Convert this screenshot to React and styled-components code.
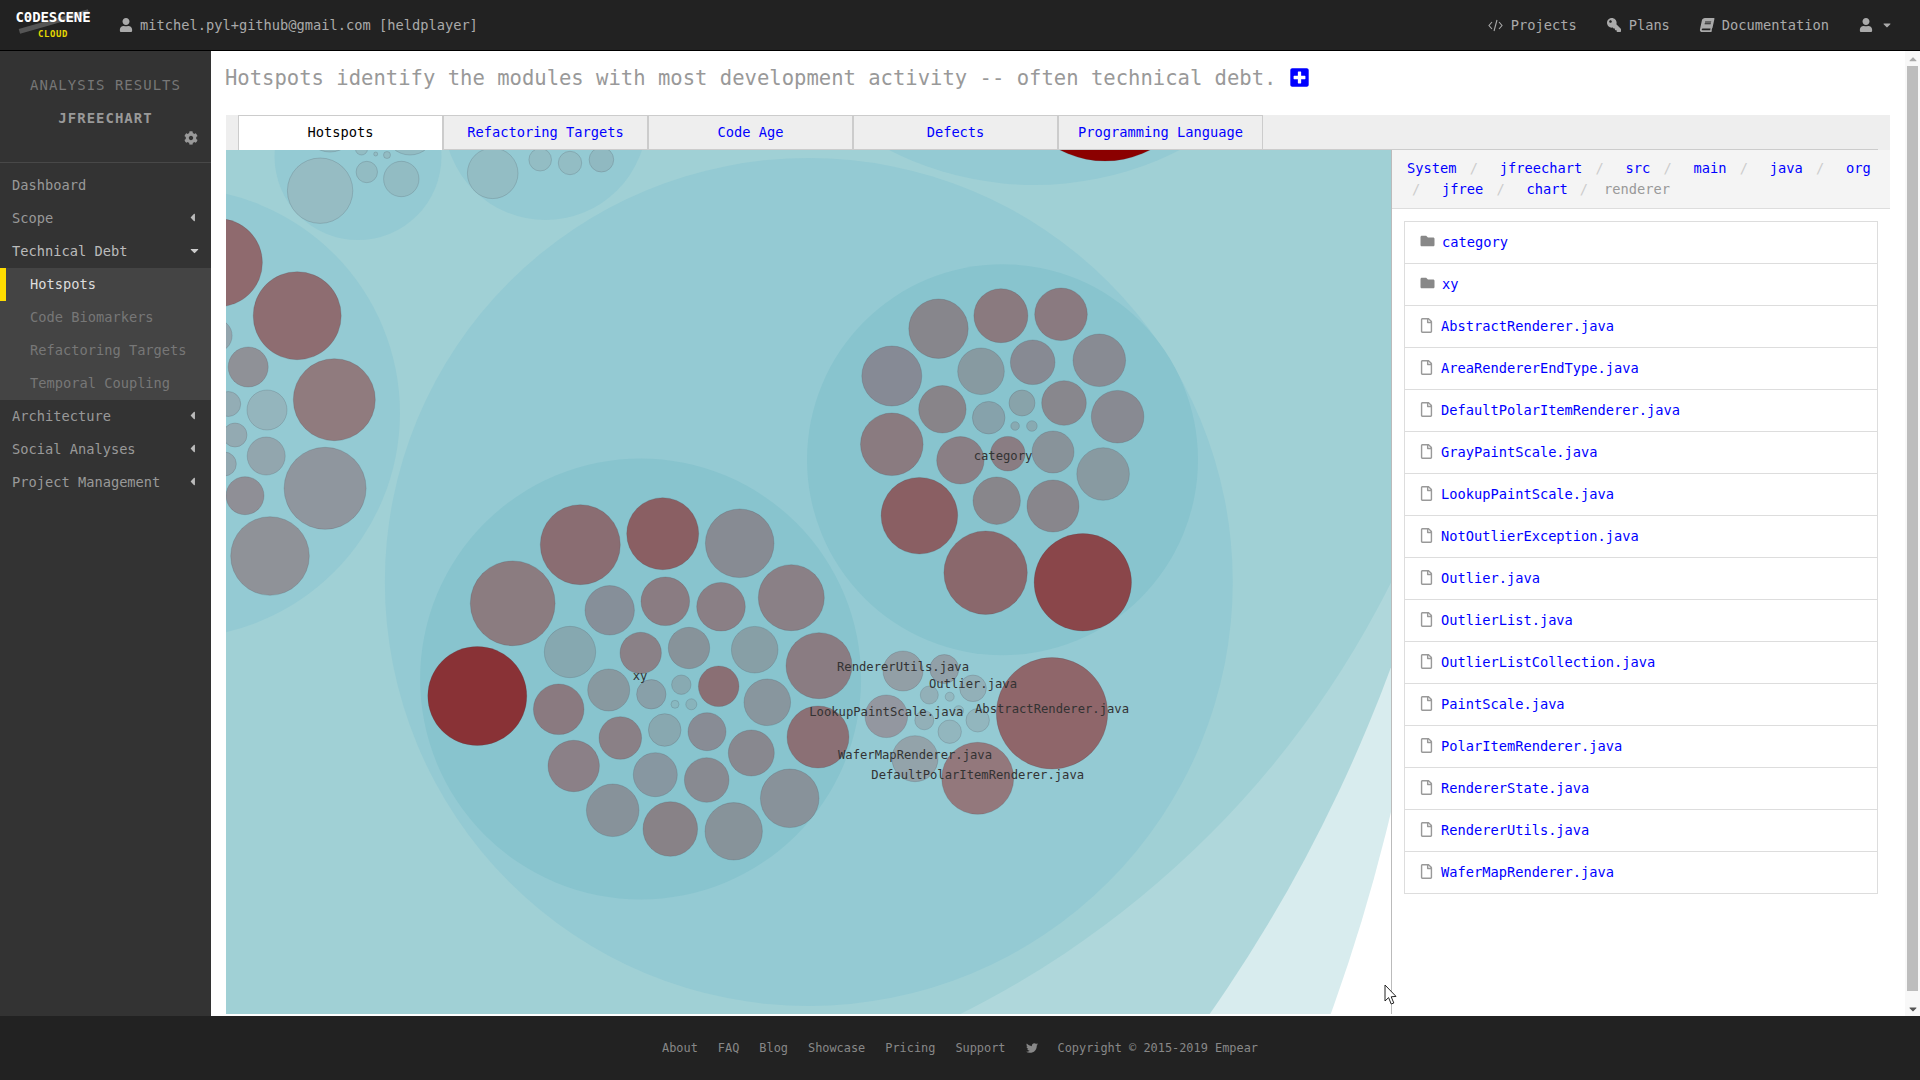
import React from "react";
import styled, { createGlobalStyle } from "styled-components";
import {
  FaUser,
  FaCog,
  FaKey,
  FaBook,
  FaFolder,
  FaRegFile,
  FaPlusSquare,
  FaTwitter,
  FaCaretLeft,
  FaCaretDown,
  FaCaretUp,
} from "react-icons/fa";

const GlobalStyle = createGlobalStyle`
  html, body {
    margin: 0;
    padding: 0;
    height: 100%;
    overflow: hidden;
    background: #fff;
    font-family: "DejaVu Sans Mono", "Liberation Mono", monospace;
    font-size: 13.7px;
  }
  * { box-sizing: border-box; }
`;

const Page = styled.div`
  position: relative;
  width: 1920px;
  height: 1080px;
  display: flex;
  flex-direction: column;
`;

/* top bar */
const TopBar = styled.header`
  height: 51px;
  flex: none;
  display: flex;
  align-items: center;
  background: #222;
  border-bottom: 1px solid #000;
  color: #aaa;
  padding: 0 27px 0 15px;
`;

const Logo = styled.div`
  position: relative;
  width: 76px;
  height: 36px;
  margin-right: 28px;
  text-align: center;
  &::before {
    content: "";
    position: absolute;
    left: 3px;
    top: 12px;
    width: 72px;
    height: 5px;
    background: #555;
    transform: rotate(-16deg);
  }
`;

const LogoName = styled.div`
  position: relative;
  color: #fff;
  font-weight: bold;
  font-size: 14px;
  line-height: 18px;
  padding-top: 1px;
  letter-spacing: -0.1px;
  white-space: nowrap;
`;

const LogoSub = styled.div`
  position: relative;
  color: #e6d800;
  font-weight: bold;
  font-size: 9px;
  line-height: 10px;
  margin-top: 3px;
  letter-spacing: 0.6px;
`;

const UserLabel = styled.div`
  display: flex;
  align-items: center;
  gap: 7px;
  flex: 1;
  white-space: nowrap;
`;

const NavLinks = styled.nav`
  display: flex;
  align-items: center;
  gap: 30px;
`;

const NavLink = styled.span`
  display: flex;
  align-items: center;
  gap: 8px;
  white-space: nowrap;
`;

const FlippedKey = styled(FaKey)`
  transform: scaleX(-1);
`;

const SlantedBook = styled(FaBook)`
  transform: skewX(-12deg);
`;

const CaretGap = styled.span`
  display: flex;
  align-items: center;
  gap: 8px;
`;

/* body */
const Body = styled.div`
  flex: 1;
  min-height: 0;
  display: flex;
`;

const Sidebar = styled.aside`
  width: 211px;
  flex: none;
  background: #333;
`;

const SideHead = styled.div`
  height: 112px;
  border-bottom: 1px solid #484848;
  padding-top: 24px;
  text-align: center;
`;

const SideTitle = styled.div`
  color: #777;
  font-size: 14px;
  letter-spacing: 1px;
  line-height: 20px;
`;

const SideProject = styled.div`
  color: #999;
  font-weight: bold;
  font-size: 14px;
  letter-spacing: 1px;
  line-height: 20px;
  margin-top: 13px;
`;

const SideGear = styled.div`
  display: flex;
  justify-content: flex-end;
  padding-right: 13px;
  margin-top: 3px;
  color: #999;
  font-size: 14px;
`;

const SideMenu = styled.ul`
  list-style: none;
  margin: 6px 0 0;
  padding: 0;
`;

const SideItem = styled.li`
  height: 33px;
  display: flex;
  align-items: center;
  justify-content: space-between;
  padding: 0 12px 2px;
  color: ${(p) => (p.$open ? "#bbb" : "#999")};
  white-space: nowrap;
`;

const SubMenu = styled.ul`
  list-style: none;
  margin: 0;
  padding: 0;
  background: #444;
`;

const SubItem = styled.li`
  height: 33px;
  line-height: 33px;
  padding-left: ${(p) => (p.$active ? "24px" : "30px")};
  border-left: ${(p) => (p.$active ? "6px solid #ffdd00" : "none")};
  color: ${(p) => (p.$active ? "#ddd" : "#777")};
  white-space: nowrap;
`;

const Caret = styled.span`
  display: flex;
  font-size: 13px;
  color: ${(p) => (p.$open ? "#ccc" : "#bbb")};
  margin-right: ${(p) => (p.$open ? "-2px" : "0")};
`;

/* main column */
const Main = styled.main`
  flex: 1;
  min-width: 0;
  display: flex;
  flex-direction: column;
  padding: 0 15px 2px 15px;
`;

const Intro = styled.div`
  height: 64px;
  flex: none;
  display: flex;
  align-items: center;
  gap: 13px;
  padding-bottom: 11px;
  margin-left: -1px;
  color: #999;
  font-size: 20.55px;
  white-space: nowrap;
`;

const MoreIcon = styled(FaPlusSquare)`
  color: #0000ff;
  font-size: 21px;
  margin-top: -1px;
`;

const TabStrip = styled.div`
  height: 35px;
  flex: none;
  background: #eee;
  padding: 0 12px;
`;

const TabRow = styled.div`
  height: 35px;
  display: flex;
  border-bottom: 1px solid #ccc;
`;

const Tab = styled.div`
  width: 205px;
  height: 35px;
  text-align: center;
  line-height: 33px;
  border: 1px solid #ccc;
  border-bottom: ${(p) => (p.$active ? "none" : "1px solid #ccc")};
  background: ${(p) => (p.$active ? "#fff" : "#eee")};
  color: ${(p) => (p.$active ? "#000" : "#0000ff")};
  white-space: nowrap;
`;

const Workspace = styled.div`
  flex: 1;
  min-height: 0;
  display: flex;
`;

const ChartBox = styled.svg`
  width: 1165px;
  height: 864px;
  flex: none;
  display: block;
`;

const Bubble = styled.circle`
  stroke: rgba(60, 60, 70, 0.18);
  stroke-width: 1;
`;

const Label = styled.text`
  font-family: "DejaVu Sans Mono", "Liberation Mono", monospace;
  font-size: 12.2px;
  fill: #333;
  text-anchor: middle;
`;

const Panel = styled.section`
  width: 499px;
  flex: none;
  border-left: 1px solid #bbb;
`;

const Crumbs = styled.div`
  height: 59px;
  background: #f4f4f4;
  border-bottom: 1px solid #ddd;
  padding: 8px 12px 0 15px;
  line-height: 21px;
`;

const Crumb = styled.span`
  color: ${(p) => (p.$current ? "#999" : "#0000ff")};
  &:not(:first-child)::before {
    content: "/";
    color: #ccc;
    padding: ${(p) => (p.$current ? "0 16px 0 12px" : "0 21.8px 0 5px")};
  }
`;

const FileList = styled.ul`
  list-style: none;
  margin: 12px 12px 0;
  padding: 0;
  border: 1px solid #ddd;
  border-bottom: none;
`;

const FileRow = styled.li`
  height: 42px;
  display: flex;
  align-items: center;
  padding-left: 15px;
  padding-bottom: 2px;
  border-bottom: 1px solid #ddd;
  color: #0000ff;
`;

const FolderIcon = styled(FaFolder)`
  width: 15px;
  height: 14px;
  margin-right: 7px;
  margin-top: -2px;
  color: #888;
`;

const FileIcon = styled(FaRegFile)`
  width: 13px;
  height: 15px;
  margin-right: 8px;
  color: #999;
`;

/* scrollbar */
const Rail = styled.div`
  width: 15px;
  flex: none;
  display: flex;
  flex-direction: column;
  background: #f8f8f8;
`;

const RailButton = styled.div`
  height: 15px;
  flex: none;
  display: flex;
  align-items: center;
  justify-content: center;
  color: ${(p) => (p.$dim ? "#aaa" : "#555")};
  font-size: 12px;
`;

const Thumb = styled.div`
  height: 925px;
  width: 11px;
  margin-left: 2px;
  background: #bdbdbd;
`;

const RailTrack = styled.div`
  flex: 1;
`;

/* footer */
const Footer = styled.footer`
  height: 64px;
  flex: none;
  background: #222;
  color: #888;
  font-size: 11.9px;
  display: flex;
  align-items: center;
  justify-content: center;
  gap: 20px;
  white-space: nowrap;
`;

const Cursor = styled.svg`
  position: absolute;
  left: 1384px;
  top: 984px;
  width: 14px;
  height: 22px;
`;

const layers = [
  [-361, 399, 1800, "#d8ecee"],
  [-40, 140, 1525, "#afd7db"],
  [532, 156, 959, "#a0d0d5"],
];

const groups = [
  [808.8, 582, 424, "#94cad3"],
  [175, 413, 225, "#94cad3"],
  [358, 156.5, 83.5, "#94cad3"],
  [545.5, 118.5, 101.5, "#94cad3"],
  [1034.4, -134.5, 319.5, "#94cad3"],
  [640.6, 679, 220.5, "#88c4ce"],
  [1002.5, 459.7, 195.5, "#88c4ce"],
];

const bubbles = [
  // left package
  [218.4, 262.7, 44, "#8f6a6e"],
  [297.2, 315.7, 44, "#8e6d71"],
  [334.3, 399.7, 41, "#907b7e"],
  [325.1, 488.3, 41, "#8f969e"],
  [270, 556, 39.3, "#8f9298"],
  [248.2, 367, 20, "#8f9197"],
  [267, 410, 20, "#94b5bd"],
  [266.2, 456, 19, "#92a6ae"],
  [245, 495.7, 19, "#8f8f96"],
  [228.2, 404, 12.5, "#93adb5"],
  [235, 435, 12, "#93aab2"],
  [224.3, 464, 12, "#93a9b1"],
  [215.4, 335.7, 16.7, "#93a5ad"],
  // top packages
  [320.1, 190.7, 32.7, "#96bcc3"],
  [366.8, 172, 10.7, "#92bcc3"],
  [401.3, 179, 17.7, "#92bcc3"],
  [410, 130, 25, "#92bcc3"],
  [361.5, 149, 6, "#92bcc3"],
  [387, 155, 3.5, "#92bcc3"],
  [375.7, 154, 2, "#92bcc3"],
  [330, 126, 26, "#92bcc3"],
  [492.7, 173.3, 25.3, "#93bdc4"],
  [540.2, 159.7, 11.3, "#93bdc4"],
  [570, 163, 11.7, "#93bdc4"],
  [601.4, 159.7, 12.3, "#90b9c1"],
  [1105, 63.5, 97.5, "#8b0000"],
  // xy
  [477.3, 696, 49.5, "#893236"],
  [512.7, 603.3, 42.4, "#8b7c80"],
  [580.3, 544.7, 40, "#8a6d72"],
  [662.7, 533.7, 36, "#8a5f63"],
  [739.7, 543.3, 34.3, "#878b93"],
  [791.3, 597.7, 33, "#8a8086"],
  [819, 665.7, 33, "#8a7c82"],
  [818, 737, 31, "#8b7075"],
  [789.7, 798.3, 29.3, "#88929a"],
  [733.7, 831.3, 28.7, "#87939a"],
  [670.3, 829, 27.3, "#888287"],
  [612.7, 810.3, 26.3, "#87929a"],
  [573.7, 766, 25.7, "#8b8087"],
  [558.7, 709.3, 25.3, "#8a7a80"],
  [570, 652, 25.7, "#86a8b0"],
  [609.7, 610.3, 24.7, "#868f99"],
  [665.3, 601.3, 24.3, "#8a7c82"],
  [721, 606.7, 24.3, "#8a7f85"],
  [754.7, 649.7, 23.3, "#879fa6"],
  [767.3, 702.3, 23.3, "#88969e"],
  [751.3, 753, 23, "#88888f"],
  [706.7, 780, 22.3, "#888a91"],
  [655.3, 774.7, 22, "#8797a1"],
  [620.3, 738, 21.3, "#8a8086"],
  [608.7, 690, 21, "#8899a0"],
  [640.7, 653, 20.7, "#8a8187"],
  [689, 648, 20.7, "#87939a"],
  [718.7, 686.3, 20.3, "#8a6f74"],
  [707, 731.7, 19, "#888c95"],
  [664.7, 730, 16.3, "#88a8b0"],
  [651.3, 694.3, 14.7, "#88a0a9"],
  [681.3, 684.7, 9.7, "#88aab2"],
  [691.3, 704.3, 5.5, "#88b3bb"],
  [675, 704.3, 4, "#88b8c0"],
  // category
  [1082.8, 582.3, 48.7, "#8a464a"],
  [985.6, 572.7, 41.7, "#8a686c"],
  [919.4, 515.7, 38.3, "#8a5f63"],
  [891.8, 444.3, 31.3, "#8a7b80"],
  [891.8, 376, 30, "#868a95"],
  [938.5, 328.7, 29.7, "#87868c"],
  [1000.9, 315.7, 27, "#8a7a7f"],
  [1061, 314.3, 26.3, "#8a7a80"],
  [1099.3, 360.3, 26.3, "#888b93"],
  [1117.6, 416.7, 26.3, "#888a92"],
  [1103.1, 474, 26.3, "#889aa1"],
  [1053, 506, 26, "#88868c"],
  [996.7, 500.7, 23.7, "#88868b"],
  [960.4, 460.3, 23.7, "#8a7f85"],
  [942.4, 409.3, 23.7, "#888489"],
  [981, 371.3, 23.3, "#879aa1"],
  [1032.7, 362.3, 22.3, "#878a93"],
  [1064, 403, 22.3, "#88878d"],
  [1053, 452, 21, "#88939a"],
  [1007.8, 453.7, 17.3, "#8a7d83"],
  [988.7, 417.7, 16.3, "#86a2ab"],
  [1022, 403, 13, "#88a3aa"],
  [1031.9, 426, 5.3, "#88aab2"],
  [1015.1, 426, 4.3, "#88aab2"],
  // renderer files
  [1052, 713.3, 55.7, "#8f666a"],
  [977.7, 778.3, 36, "#93787c"],
  [915, 758.7, 23, "#93a3aa"],
  [886.3, 716.3, 21.3, "#9397a0"],
  [903, 671, 20, "#929fa6"],
  [944.3, 669, 14.5, "#91a0a8"],
  [973, 688.3, 13.3, "#92b0b8"],
  [977.7, 720.3, 11.7, "#92b6be"],
  [949.7, 731.7, 11.7, "#92b6be"],
  [924.3, 720.3, 9.5, "#92b0b8"],
  [929.3, 695, 9, "#92b0b8"],
  [949.7, 696.7, 4.5, "#92b8c0"],
  [958.7, 710.7, 5, "#92bcc4"],
];

const labels = [
  [640, 680, "xy"],
  [1003, 460, "category"],
  [903, 671, "RendererUtils.java"],
  [973, 688, "Outlier.java"],
  [886.3, 716, "LookupPaintScale.java"],
  [1052, 713, "AbstractRenderer.java"],
  [915, 759, "WaferMapRenderer.java"],
  [977.7, 779, "DefaultPolarItemRenderer.java"],
];

const crumbs = ["System", "jfreechart", "src", "main", "java", "org", "jfree", "chart"];

const files = [
  "AbstractRenderer.java",
  "AreaRendererEndType.java",
  "DefaultPolarItemRenderer.java",
  "GrayPaintScale.java",
  "LookupPaintScale.java",
  "NotOutlierException.java",
  "Outlier.java",
  "OutlierList.java",
  "OutlierListCollection.java",
  "PaintScale.java",
  "PolarItemRenderer.java",
  "RendererState.java",
  "RendererUtils.java",
  "WaferMapRenderer.java",
];

const tabs = ["Hotspots", "Refactoring Targets", "Code Age", "Defects", "Programming Language"];

function CodeGlyph() {
  return (
    <svg width="15" height="13" viewBox="0 0 15 13" fill="none" stroke="#aaa" strokeWidth="1.1">
      <polyline points="4,3 1,6.5 4,10" />
      <line x1="9" y1="1" x2="6" y2="12" />
      <polyline points="11,3 14,6.5 11,10" />
    </svg>
  );
}

function Chart() {
  return (
    <ChartBox viewBox="226 150 1165 864">
      <rect x="226" y="150" width="1165" height="864" fill="#fff" />
      {layers.concat(groups).map(([x, y, r, c], i) => (
        <circle key={i} cx={x} cy={y} r={r} fill={c} />
      ))}
      {bubbles.map(([x, y, r, c], i) => (
        <Bubble key={i} cx={x} cy={y} r={r} fill={c} />
      ))}
      {labels.map(([x, y, t]) => (
        <Label key={t} x={x} y={y}>
          {t}
        </Label>
      ))}
    </ChartBox>
  );
}

export default function App() {
  return (
    <Page>
      <GlobalStyle />
      <TopBar>
        <Logo>
          <LogoName>C0DESCENE</LogoName>
          <LogoSub>CLOUD</LogoSub>
        </Logo>
        <UserLabel>
          <FaUser size={14} />
          mitchel.pyl+github@gmail.com [heldplayer]
        </UserLabel>
        <NavLinks>
          <NavLink>
            <CodeGlyph />
            Projects
          </NavLink>
          <NavLink>
            <FlippedKey size={14} />
            Plans
          </NavLink>
          <NavLink>
            <SlantedBook size={14} />
            Documentation
          </NavLink>
          <CaretGap>
            <FaUser size={14} />
            <FaCaretDown size={12} />
          </CaretGap>
        </NavLinks>
      </TopBar>
      <Body>
        <Sidebar>
          <SideHead>
            <SideTitle>ANALYSIS RESULTS</SideTitle>
            <SideProject>JFREECHART</SideProject>
            <SideGear>
              <FaCog />
            </SideGear>
          </SideHead>
          <SideMenu>
            <SideItem>Dashboard</SideItem>
            <SideItem>
              Scope
              <Caret>
                <FaCaretLeft />
              </Caret>
            </SideItem>
            <SideItem $open>
              Technical Debt
              <Caret $open>
                <FaCaretDown />
              </Caret>
            </SideItem>
            <SubMenu>
              <SubItem $active>Hotspots</SubItem>
              <SubItem>Code Biomarkers</SubItem>
              <SubItem>Refactoring Targets</SubItem>
              <SubItem>Temporal Coupling</SubItem>
            </SubMenu>
            <SideItem>
              Architecture
              <Caret>
                <FaCaretLeft />
              </Caret>
            </SideItem>
            <SideItem>
              Social Analyses
              <Caret>
                <FaCaretLeft />
              </Caret>
            </SideItem>
            <SideItem>
              Project Management
              <Caret>
                <FaCaretLeft />
              </Caret>
            </SideItem>
          </SideMenu>
        </Sidebar>
        <Main>
          <Intro>
            Hotspots identify the modules with most development activity -- often technical debt.
            <MoreIcon />
          </Intro>
          <TabStrip>
            <TabRow>
              {tabs.map((t, i) => (
                <Tab key={t} $active={i === 0}>
                  {t}
                </Tab>
              ))}
            </TabRow>
          </TabStrip>
          <Workspace>
            <Chart />
            <Panel>
              <Crumbs>
                {crumbs.map((c, i) => (
                  <React.Fragment key={c}>
                    <Crumb>{c}</Crumb>
                    {i < crumbs.length - 1 ? " " : null}
                  </React.Fragment>
                ))}
                <Crumb $current>renderer</Crumb>
              </Crumbs>
              <FileList>
                <FileRow>
                  <FolderIcon />
                  category
                </FileRow>
                <FileRow>
                  <FolderIcon />
                  xy
                </FileRow>
                {files.map((f) => (
                  <FileRow key={f}>
                    <FileIcon />
                    {f}
                  </FileRow>
                ))}
              </FileList>
            </Panel>
          </Workspace>
        </Main>
        <Rail>
          <RailButton $dim>
            <FaCaretUp />
          </RailButton>
          <Thumb />
          <RailTrack />
          <RailButton>
            <FaCaretDown />
          </RailButton>
        </Rail>
      </Body>
      <Footer>
        <span>About</span>
        <span>FAQ</span>
        <span>Blog</span>
        <span>Showcase</span>
        <span>Pricing</span>
        <span>Support</span>
        <FaTwitter size={12} />
        <span>Copyright © 2015-2019 Empear</span>
      </Footer>
      <Cursor viewBox="0 0 14 22">
        <path d="M1 1 L1 17 L4.6 13.6 L7.2 20 L9.8 19 L7.2 12.8 L12 12.4 Z" fill="#fff" stroke="#222" strokeWidth="1" />
      </Cursor>
    </Page>
  );
}
